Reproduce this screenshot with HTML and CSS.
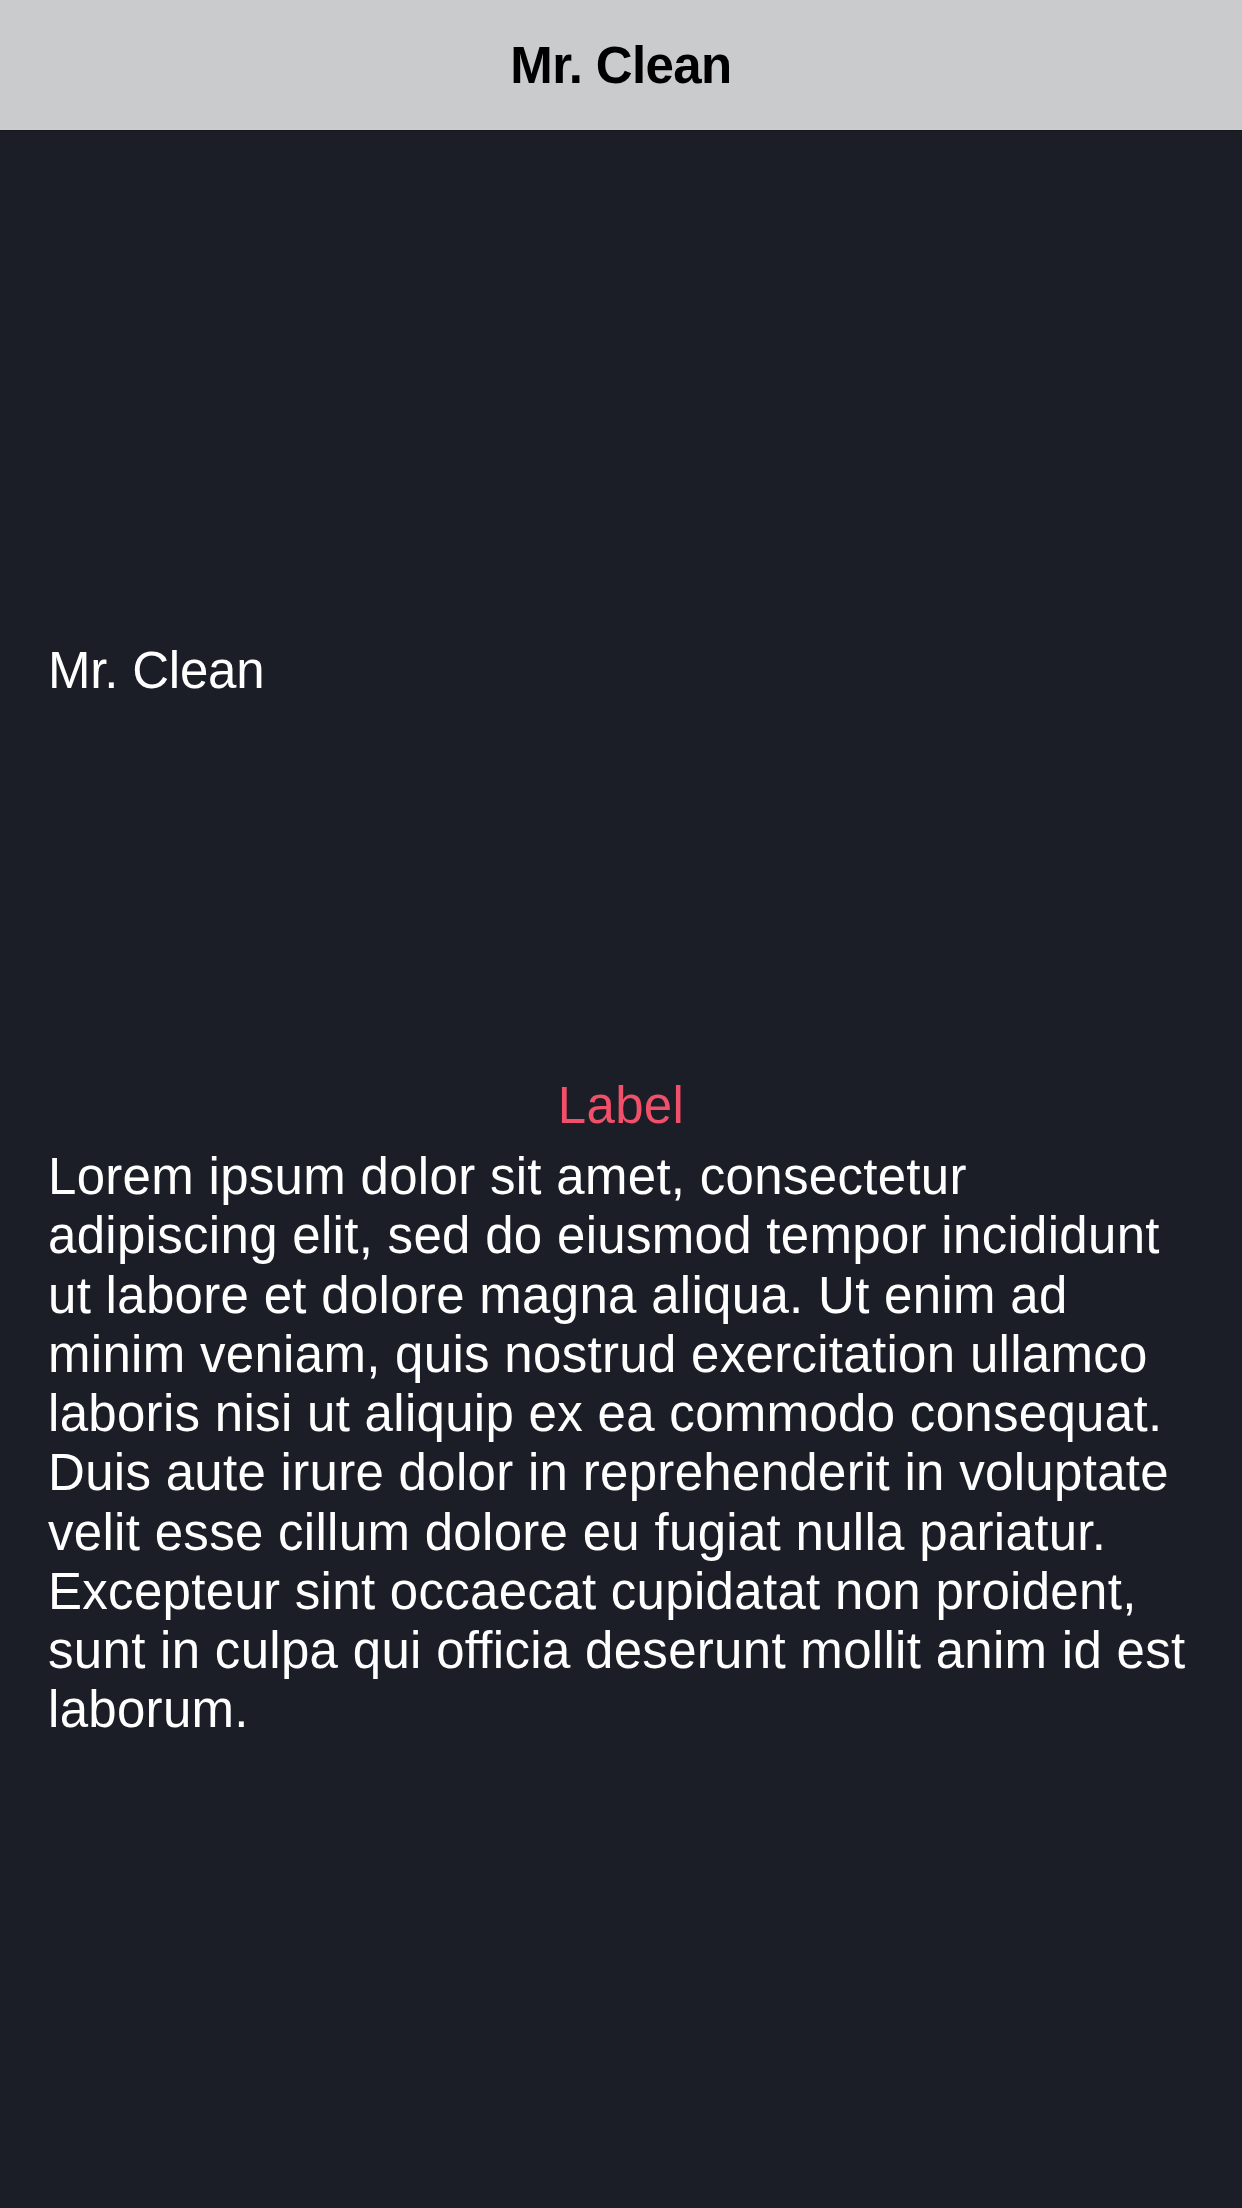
FILE: index.html
```html
<!DOCTYPE html>
<html lang="en">
<head>
<meta charset="utf-8">
<title>Mr. Clean</title>
<link rel="stylesheet" href="styles.css">
</head>
<body>
<header class="navbar">
  <h1 class="nav-title">Mr. Clean</h1>
</header>
<main class="content">
  <p class="name">Mr. Clean</p>
  <p class="label">Label</p>
  <p class="body-text">Lorem ipsum dolor sit amet, consectetur adipiscing elit, sed do eiusmod tempor incididunt ut labore et dolore magna aliqua. Ut enim ad minim veniam, quis nostrud exercitation ullamco laboris nisi ut aliquip ex ea commodo consequat. Duis aute irure dolor in reprehenderit in voluptate velit esse cillum dolore eu fugiat nulla pariatur. Excepteur sint occaecat cupidatat non proident, sunt in culpa qui officia deserunt mollit anim id est laborum.</p>
</main>
</body>
</html>
```
FILE: styles.css
```css
html, body {
  margin: 0;
  padding: 0;
}
body {
  width: 1242px;
  min-height: 2208px;
  background: #1b1e26;
  font-family: "Liberation Sans", Arial, sans-serif;
  font-size: 51px;
  line-height: 59px;
  letter-spacing: 0.3px;
}
.navbar {
  height: 130px;
  background: #cacbcd;
  border-bottom: 1px solid #16181e;
  display: flex;
  align-items: center;
  justify-content: center;
}
.nav-title {
  margin: 0;
  font-size: 51px;
  line-height: 59px;
  font-weight: 700;
  color: #000;
  letter-spacing: -0.6px;
}
.content {
  padding: 0 48px;
  display: flex;
  flex-direction: column;
}
.name {
  margin: 510px 0 0;
  color: #ffffff;
  letter-spacing: -0.2px;
}
.label {
  margin: 376px 0 0;
  color: #f0506a;
  text-align: center;
}
.body-text {
  margin: 12px 0 0;
  color: #ffffff;
  line-height: 59.25px;
}
```
